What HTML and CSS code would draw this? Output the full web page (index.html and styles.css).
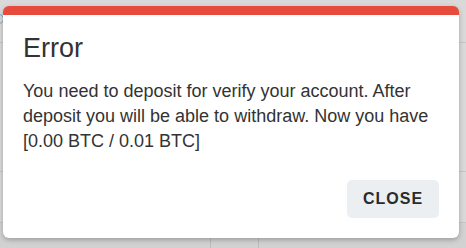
FILE: index.html
```html
<!DOCTYPE html>
<html>
<head>
<meta charset="utf-8">
<link rel="stylesheet" href="styles.css">
</head>
<body>
<div class="page">
  <div class="row row-top"><span class="dot"></span></div>
  <div class="row row-a"></div>
  <div class="row row-b"></div>
  <div class="row row-c">
    <div class="cell cell-1"></div>
    <div class="cell cell-2"></div>
    <div class="cell cell-3"></div>
  </div>
</div>
<div class="dialog">
  <h2 class="title">Error</h2>
  <p class="message">You need to deposit for verify your account. After deposit you will be able to withdraw. Now you have [0.00 BTC / 0.01 BTC]</p>
  <div class="actions">
    <button class="close">CLOSE</button>
  </div>
</div>
</body>
</html>
```
FILE: styles.css
```css
html, body {
  margin: 0;
  padding: 0;
}
body {
  width: 466px;
  height: 248px;
  overflow: hidden;
  background: #d9d9d9;
  font-family: "Liberation Sans", Arial, sans-serif;
  position: relative;
}
.page {
  display: flex;
  flex-direction: column;
  height: 248px;
}
.row {
  border-bottom: 1px solid #c6c6c6;
  box-sizing: border-box;
}
.row-top {
  height: 43px;
  position: relative;
}
.dot {
  position: absolute;
  left: -6px;
  top: 14px;
  width: 8px;
  height: 8px;
  border: 1.5px solid #7aa6cf;
  border-radius: 50%;
}
.row-a { height: 129px; }
.row-b { height: 51px; }
.row-c {
  flex: 1;
  border-bottom: none;
  display: flex;
  background: #d2d2d2;
}
.cell {
  border-right: 1px solid #bdbdbd;
}
.cell-1 { width: 210px; }
.cell-2 { width: 47px; }
.cell-3 { flex: 1; border-right: none; }

.dialog {
  position: absolute;
  left: 3px;
  top: 6px;
  width: 456px;
  height: 232px;
  box-sizing: border-box;
  background: #fff;
  border-top: 9px solid #e64b3c;
  border-radius: 6px;
  box-shadow: 0 2px 5px rgba(0,0,0,0.25);
  padding: 18px 20px 20px 20px;
  display: flex;
  flex-direction: column;
}
.title {
  margin: 0;
  font-size: 27px;
  font-weight: normal;
  line-height: 31px;
  color: #333;
}
.message {
  margin: 15px 0 0 0;
  font-size: 18px;
  line-height: 25px;
  color: #333;
}
.actions {
  margin-top: auto;
  display: flex;
  justify-content: flex-end;
}
.close {
  width: 92px;
  height: 38px;
  border: none;
  border-radius: 5px;
  background: #eceff1;
  color: #2b2b2b;
  font-family: "Liberation Sans", Arial, sans-serif;
  font-weight: bold;
  font-size: 16px;
  letter-spacing: 1px;
  padding: 0;
}
```
